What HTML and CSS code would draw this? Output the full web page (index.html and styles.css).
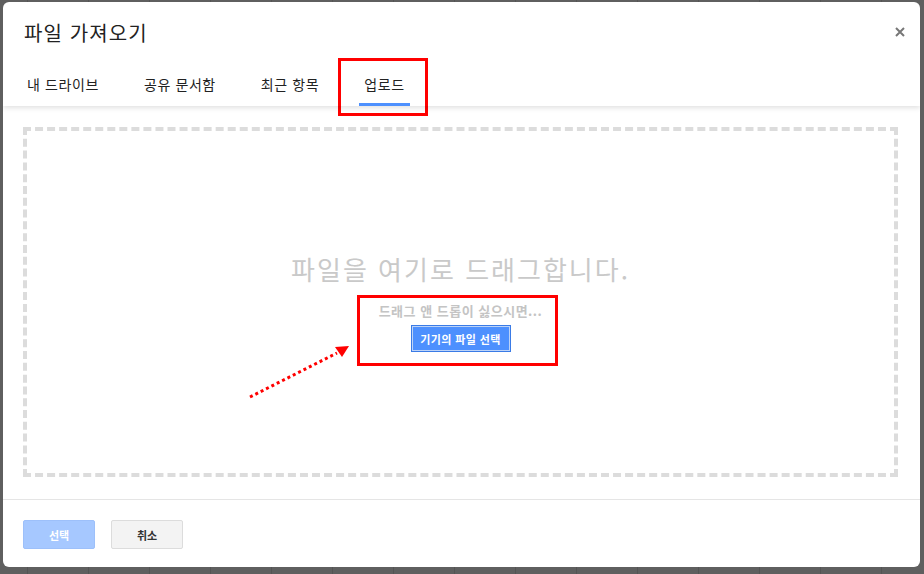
FILE: index.html
```html
<!DOCTYPE html>
<html lang="ko">
<head>
<meta charset="utf-8">
<title>파일 가져오기</title>
<link rel="stylesheet" href="styles.css">
</head>
<body>
<div class="dialog">
  <div class="header">
    <div class="title-row">
      <h1 class="title">파일 가져오기</h1>
      <button class="close" aria-label="닫기">
        <svg width="10" height="10" viewBox="0 0 10 10"><path d="M1 1L9 9M9 1L1 9" stroke="#777" stroke-width="2"/></svg>
      </button>
    </div>
    <div class="tabs">
      <div class="tab">내 드라이브</div>
      <div class="tab">공유 문서함</div>
      <div class="tab">최근 항목</div>
      <div class="tab active">업로드</div>
    </div>
  </div>
  <div class="body">
    <div class="drop">
      <div class="drop-main">파일을 여기로 드래그합니다.</div>
      <div class="drop-sub">드래그 앤 드롭이 싫으시면...</div>
      <button class="pick">기기의 파일 선택</button>
    </div>
  </div>
  <div class="footer">
    <button class="btn btn-primary">선택</button>
    <button class="btn btn-cancel">취소</button>
  </div>
</div>
<div class="mark mark-tab"></div>
<div class="mark mark-pick"></div>
<svg class="arrow" width="924" height="574" viewBox="0 0 924 574">
  <line x1="250" y1="397" x2="337" y2="353" stroke="#f00" stroke-width="3" stroke-dasharray="3 3"/>
  <polygon points="335,347 349,346 342,357" fill="#f00"/>
</svg>
</body>
</html>
```

FILE: styles.css
```css
* { box-sizing: border-box; }
html, body { margin: 0; padding: 0; }
body {
  width: 924px;
  height: 574px;
  overflow: hidden;
  position: relative;
  background-color: #5f5f5f;
  background-image: repeating-linear-gradient(90deg, transparent 0, transparent 27px, #545454 27px, #545454 28px, transparent 28px, transparent 61px);
  font-family: "Noto Sans CJK KR", "Noto Sans", sans-serif;
  padding-top: 2px;
  padding-left: 3px;
}
.dialog {
  width: 917px;
  height: 565px;
  background: #fff;
  border-radius: 6px;
  display: flex;
  flex-direction: column;
  overflow: hidden;
}
.header {
  height: 104px;
  box-shadow: 0 2px 5px rgba(0,0,0,0.12);
  position: relative;
  z-index: 1;
  display: flex;
  flex-direction: column;
}
.title-row {
  display: flex;
  align-items: center;
  justify-content: space-between;
  padding: 16px 14px 0 21px;
  height: 46px;
}
.title {
  margin: 0;
  font-size: 20px;
  font-weight: 400;
  color: #222;
  line-height: 28px;
  letter-spacing: 1.1px;
}
.close {
  border: 0;
  background: none;
  padding: 0;
  width: 12px;
  height: 12px;
  display: flex;
  align-items: center;
  justify-content: center;
  margin-top: -2px;
}
.tabs {
  display: flex;
  gap: 35px;
  padding-left: 19px;
  margin-top: 16px;
}
.tab {
  font-size: 14px;
  color: #222;
  padding: 0 5px;
  height: 42px;
  line-height: 40px;
  letter-spacing: 0.6px;
  border-bottom: 3px solid transparent;
}
.tab.active {
  border-bottom-color: #4d90fe;
}
.body {
  flex: 1;
  padding: 21px 22px 22px 20px;
}
.drop {
  height: 100%;
  border: 4px dashed #dcdcdc;
  display: flex;
  flex-direction: column;
  align-items: center;
  justify-content: center;
}
.drop-main {
  font-size: 26px;
  color: #c9c9c9;
  line-height: 34px;
  letter-spacing: 2px;
}
.drop-sub {
  font-size: 13px;
  font-weight: 700;
  color: #c4c4c4;
  margin-top: 16px;
  line-height: 18px;
  letter-spacing: 0.5px;
}
.pick {
  margin-top: 5px;
  width: 100px;
  height: 27px;
  background: #4d90fe;
  border: 1px solid #3a7be6;
  box-shadow: inset 0 0 0 1px #bcd3f8;
  color: #fff;
  font-family: inherit;
  font-size: 11px;
  font-weight: 700;
  letter-spacing: 0.4px;
  padding: 0;
}
.footer {
  border-top: 1px solid #e5e5e5;
  height: 68px;
  display: flex;
  gap: 16px;
  padding: 20px 0 0 20px;
}
.btn {
  width: 72px;
  height: 29px;
  border-radius: 2px;
  font-family: inherit;
  font-size: 11px;
  font-weight: 700;
  padding: 0;
}
.btn-primary {
  background: #a6c8ff;
  border: 1px solid #9dc0fa;
  color: #fff;
}
.btn-cancel {
  background: #f3f3f3;
  border: 1px solid #dcdcdc;
  color: #333;
}
.mark {
  position: absolute;
  border: 3px solid #f00;
}
.mark-tab {
  left: 338px;
  top: 58px;
  width: 90px;
  height: 58px;
}
.mark-pick {
  left: 357px;
  top: 295px;
  width: 201px;
  height: 71px;
}
.arrow {
  position: absolute;
  left: 0;
  top: 0;
  pointer-events: none;
}
```
